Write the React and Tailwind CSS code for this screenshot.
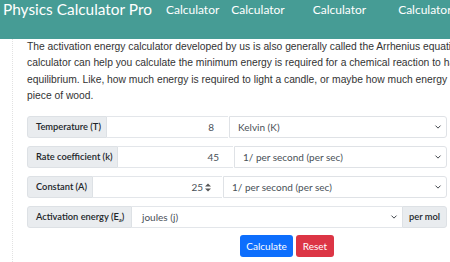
import React from "react";

const Chevron = ({ className = "" }) => (
  <svg className={className} width="8" height="6" viewBox="0 0 16 16" fill="none" stroke="#343a40" strokeWidth="2.5" strokeLinecap="round" strokeLinejoin="round">
    <path d="M2 5l6 6 6-6" />
  </svg>
);

const Spinner = () => (
  <svg className="ml-[2px]" width="6" height="9" viewBox="0 0 6 9" fill="#555">
    <path d="M0 3.5L3 0.5L6 3.5Z" />
    <path d="M0 5.5L3 8.5L6 5.5Z" />
  </svg>
);

function Row({ label, labelW, inputW, value, unit, spinner }) {
  return (
    <div className="flex h-[22px] w-[420px] text-[10px]">
      <div
        className="flex items-center whitespace-nowrap border border-[#dde1e5] bg-[#e9ecef] pl-[8px] rounded-l-[3px] text-[#212529] text-[9.3px] font-semibold shrink-0"
        style={{ width: labelW }}
      >
        {label}
      </div>
      <div
        className="flex items-center justify-end border-y border-[#e3e6ea] bg-white text-[#495057] shrink-0"
        style={{ width: inputW, paddingRight: spinner ? 11 : 14 }}
      >
        <span>{value}</span>
        {spinner && <Spinner />}
      </div>
      <div className="ml-[1px] flex flex-1 items-center justify-between border border-[#dfe2e6] rounded-r-[3px] bg-white pl-[8px] pr-[4px] text-[#495057]">
        <span>{unit}</span>
        <Chevron />
      </div>
    </div>
  );
}

export default function App() {
  return (
    <div className="w-[450px] h-[262px] overflow-hidden bg-white" style={{ fontFamily: "Lato, 'Noto Sans', sans-serif" }}>
      <header className="h-[39px] bg-[#469c95] flex items-start text-white whitespace-nowrap">
        <div className="ml-[3px] mt-[-1px] text-[15.4px] leading-[20px] shrink-0">Physics Calculator Pro</div>
        <nav className="flex shrink-0 text-[12px] leading-[17px] mt-[1px]">
          <span className="ml-[14px]">Calculator</span>
          <span className="ml-[12px]">Calculator</span>
          <span className="ml-[28px]">Calculator</span>
          <span className="ml-[32px]">Calculator</span>
        </nav>
      </header>
      <div className="flex">
        <div className="w-[13px] h-[223px] border-r border-dotted border-[#e2e2e2] shrink-0" />
        <main className="pl-[14px]">
          <p
            className="whitespace-nowrap text-[10.3px] leading-[16.3px] text-[#333]"
            style={{ fontFamily: "'Liberation Sans', Arial, sans-serif" }}
          >
            The activation energy calculator developed by us is also generally called the Arrhenius equation.
            <br />
            calculator can help you calculate the minimum energy is required for a chemical reaction to happen
            <br />
            equilibrium. Like, how much energy is required to light a candle, or maybe how much energy
            <br />
            piece of wood.
          </p>
          <div className="mt-[12px] flex flex-col gap-[8px]">
            <Row label="Temperature (T)" labelW={80} inputW={121} value="8" unit="Kelvin (K)" />
            <Row label="Rate coefficient (k)" labelW={91} inputW={115} value="45" unit="1/ per second (per sec)" />
            <Row label="Constant (A)" labelW={66} inputW={129} value="25" unit="1/ per second (per sec)" spinner />
            <div className="flex h-[22px] w-[420px] text-[10px]">
              <div className="flex w-[105px] shrink-0 items-center whitespace-nowrap border border-[#dde1e5] bg-[#e9ecef] pl-[8px] rounded-l-[3px] text-[#212529] text-[9.3px] font-semibold">
                Activation energy (E<span className="text-[6px] relative top-[2px]">a</span>)
              </div>
              <div className="flex flex-1 items-center justify-between border-y border-[#e3e6ea] bg-white pl-[10px] pr-[4px] text-[#495057]">
                <span>joules (j)</span>
                <Chevron />
              </div>
              <div className="flex w-[45px] items-center justify-center border border-[#dde1e5] bg-[#e9ecef] rounded-r-[3px] text-[#212529] text-[9.3px] font-semibold">
                per mol
              </div>
            </div>
          </div>
          <div className="mt-[7px] flex gap-[3px] pl-[213px] text-[10px]">
            <button className="h-[22px] w-[53px] rounded-[3px] bg-[#0d6efd] text-white">Calculate</button>
            <button className="h-[22px] w-[38px] rounded-[3px] bg-[#dc3545] text-white">Reset</button>
          </div>
        </main>
      </div>
    </div>
  );
}
